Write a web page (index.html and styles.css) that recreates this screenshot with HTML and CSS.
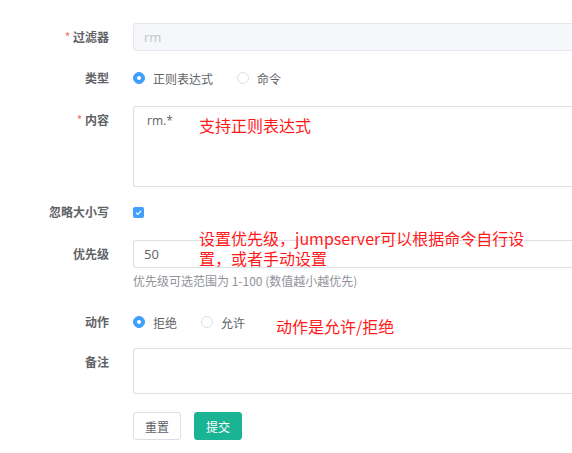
FILE: index.html
```html
<!DOCTYPE html>
<html lang="zh-CN">
<head>
<meta charset="utf-8">
<title>命令过滤规则</title>
<link rel="stylesheet" href="styles.css">
</head>
<body>
<form class="form">
  <div class="item gap13">
    <label class="label"><span class="req">*</span> 过滤器</label>
    <div class="ctrl">
      <div class="input disabled">rm</div>
    </div>
  </div>
  <div class="item gap14">
    <label class="label">类型</label>
    <div class="ctrl line">
      <span class="radio checked"></span><span class="rtext">正则表达式</span>
      <span class="radio"></span><span class="rtext">命令</span>
    </div>
  </div>
  <div class="item gap11">
    <label class="label"><span class="req">*</span> 内容</label>
    <div class="ctrl">
      <div class="textarea tall">rm.*</div>
      <div class="note n1">支持正则表达式</div>
    </div>
  </div>
  <div class="item gap14">
    <label class="label">忽略大小写</label>
    <div class="ctrl line">
      <span class="checkbox"><svg viewBox="0 0 12 12" width="12" height="12"><path d="M3.3 6.2 L5.2 8 L8.8 4.2" fill="none" stroke="#fff" stroke-width="1.3"/></svg></span>
    </div>
  </div>
  <div class="item gap18">
    <label class="label">优先级</label>
    <div class="ctrl">
      <div class="input">50</div>
      <div class="help">优先级可选范围为 1-100 (数值越小越优先)</div>
      <div class="note n2">设置优先级，jumpserver可以根据命令自行设<br>置，或者手动设置</div>
    </div>
  </div>
  <div class="item gap12">
    <label class="label">动作</label>
    <div class="ctrl line">
      <span class="radio checked"></span><span class="rtext">拒绝</span>
      <span class="radio"></span><span class="rtext">允许</span>
      <div class="note n3">动作是允许/拒绝</div>
    </div>
  </div>
  <div class="item gap18">
    <label class="label">备注</label>
    <div class="ctrl">
      <div class="textarea short"></div>
    </div>
  </div>
  <div class="item">
    <span class="label"></span>
    <div class="ctrl buttons">
      <button type="button" class="btn">重置</button>
      <button type="button" class="btn primary">提交</button>
    </div>
  </div>
</form>
</body>
</html>
```
FILE: styles.css
```css
html, body {
  margin: 0;
  padding: 0;
  overflow: hidden;
  background: #fff;
}
body {
  font-family: "Noto Sans CJK SC", "Noto Sans", sans-serif;
  font-size: 12px;
  color: #606266;
}
.form {
  padding-top: 23px;
  width: 780px;
}
.item {
  display: grid;
  grid-template-columns: 109px 620px;
  column-gap: 24px;
  align-items: start;
}
.gap11 { margin-bottom: 11px; }
.gap12 { margin-bottom: 12px; }
.gap13 { margin-bottom: 13px; }
.gap14 { margin-bottom: 14px; }
.gap18 { margin-bottom: 18px; }
.label {
  text-align: right;
  line-height: 28px;
  font-weight: bold;
  color: #606266;
  white-space: nowrap;
}
.req {
  color: #f56c6c;
  font-weight: normal;
}
.ctrl {
  position: relative;
}
.line {
  height: 28px;
  display: flex;
  align-items: center;
}
.input {
  box-sizing: border-box;
  height: 28px;
  line-height: 26px;
  border: 1px solid #dcdfe6;
  border-radius: 3px 0 0 3px;
  border-right: none;
  padding: 0 10px;
  font-family: "Open Sans", "Noto Sans", sans-serif;
  font-size: 13px;
  color: #606266;
}
.input.disabled {
  background: #f5f7fa;
  border-color: #e4e7ed;
  color: #c0c4cc;
}
.textarea {
  box-sizing: border-box;
  border: 1px solid #dcdfe6;
  border-right: none;
  border-radius: 3px 0 0 3px;
  padding: 5px 13px;
  line-height: 18px;
  font-family: "Open Sans", "Noto Sans", sans-serif;
  font-size: 12px;
  color: #606266;
}
.tall { height: 81px; }
.short { height: 46px; }
.radio {
  box-sizing: border-box;
  width: 12px;
  height: 12px;
  border: 1px solid #dcdfe6;
  border-radius: 50%;
  background: #fff;
  position: relative;
  flex: none;
}
.radio.checked {
  background: #409eff;
  border-color: #409eff;
}
.radio.checked::after {
  content: "";
  position: absolute;
  left: 50%;
  top: 50%;
  width: 4px;
  height: 4px;
  margin: -2px 0 0 -2px;
  border-radius: 50%;
  background: #fff;
}
.rtext {
  margin-left: 8px;
  margin-right: 24px;
  color: #606266;
}
.checkbox {
  box-sizing: border-box;
  width: 11px;
  height: 11px;
  border-radius: 2px;
  background: #409eff;
  display: flex;
  align-items: center;
  justify-content: center;
}
.checkbox svg {
  display: block;
  width: 11px;
  height: 11px;
}
.help {
  margin-top: 4px;
  line-height: 18px;
  color: #909399;
  font-size: 12px;
}
.note {
  position: absolute;
  color: #ff1a1a;
  font-size: 16px;
  line-height: 20px;
  white-space: nowrap;
  font-family: "Noto Sans CJK SC", "Noto Sans", sans-serif;
}
.n1 { left: 66px; top: 9px; }
.n2 { left: 66px; top: -12px; }
.n3 { left: 143px; top: 8px; }
.buttons {
  display: flex;
  gap: 13px;
}
.btn {
  box-sizing: border-box;
  width: 48px;
  height: 28px;
  padding: 0;
  border: 1px solid #dcdfe6;
  border-radius: 3px;
  background: #fff;
  color: #606266;
  font-family: "Noto Sans CJK SC", sans-serif;
  font-size: 12px;
  cursor: pointer;
}
.btn.primary {
  background: #1ab394;
  border-color: #1ab394;
  color: #fff;
}
```
